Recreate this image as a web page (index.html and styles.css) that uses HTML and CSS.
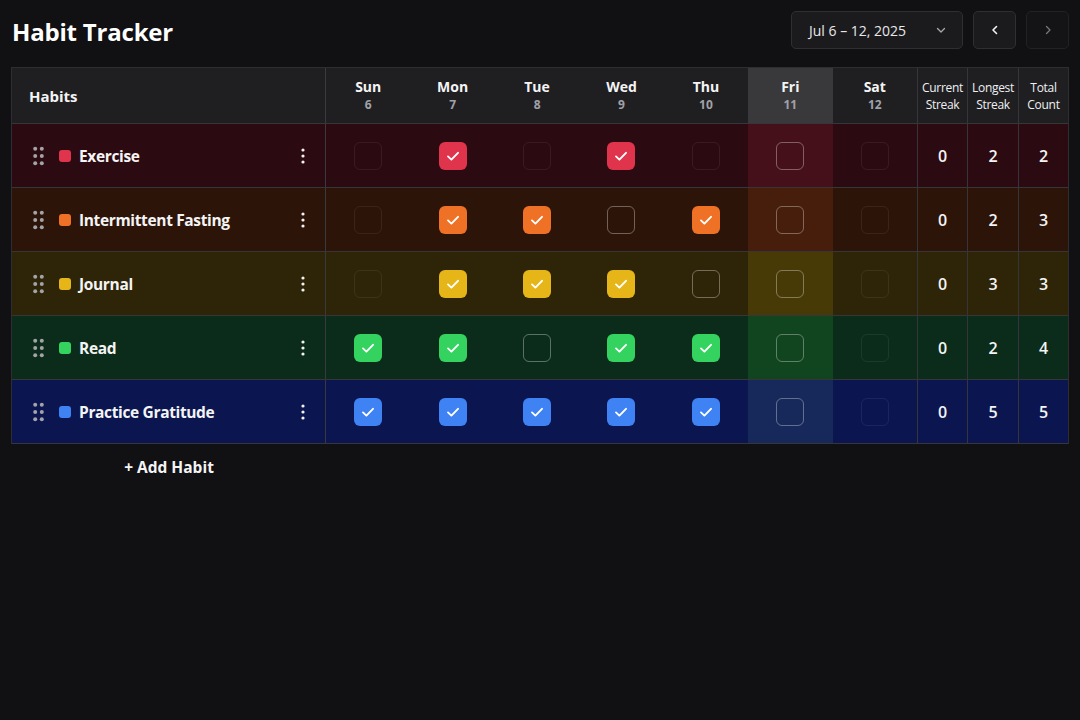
FILE: index.html
```html
<!DOCTYPE html>
<html lang="en">
<head>
<meta charset="utf-8">
<title>Habit Tracker</title>
<link rel="stylesheet" href="styles.css">
</head>
<body>
<div class="app">
  <header class="topbar">
    <h1 class="title">Habit Tracker</h1>
    <div class="controls">
      <button class="range">
        <span>Jul 6 – 12, 2025</span>
        <svg width="12" height="12" viewBox="0 0 12 12"><path d="M2.5 4.5 6 8l3.5-3.5" fill="none" stroke="#a8a8ad" stroke-width="1.3" stroke-linecap="round" stroke-linejoin="round"/></svg>
      </button>
      <button class="nav">
        <svg width="12" height="12" viewBox="0 0 12 12"><path d="M7.5 2.5 4 6l3.5 3.5" fill="none" stroke="#f2f2f2" stroke-width="1.6" stroke-linecap="round" stroke-linejoin="round"/></svg>
      </button>
      <button class="nav disabled">
        <svg width="12" height="12" viewBox="0 0 12 12"><path d="M4.5 2.5 8 6l-3.5 3.5" fill="none" stroke="#77777c" stroke-width="1.3" stroke-linecap="round" stroke-linejoin="round"/></svg>
      </button>
    </div>
  </header>

  <div class="table">
    <div class="row head">
      <div class="cell habits-h">Habits</div>
      <div class="cell day"><b>Sun</b><span>6</span></div>
      <div class="cell day"><b>Mon</b><span>7</span></div>
      <div class="cell day"><b>Tue</b><span>8</span></div>
      <div class="cell day"><b>Wed</b><span>9</span></div>
      <div class="cell day"><b>Thu</b><span>10</span></div>
      <div class="cell day today"><b>Fri</b><span>11</span></div>
      <div class="cell day"><b>Sat</b><span>12</span></div>
      <div class="cell stat-h first">Current<br>Streak</div>
      <div class="cell stat-h">Longest<br>Streak</div>
      <div class="cell stat-h">Total<br>Count</div>
    </div>
  </div>
  <div class="add"><span>+ Add Habit</span></div>
</div>
<script src="app.js"></script>
</body>
</html>
```
FILE: app.js
```js
const habits = [
  { name: "Exercise", cls: "red", days: ["f","c","f","c","f","n","f"], stats: [0,2,2] },
  { name: "Intermittent Fasting", cls: "orange", days: ["f","c","c","n","c","n","f"], stats: [0,2,3] },
  { name: "Journal", cls: "yellow", days: ["f","c","c","c","n","n","f"], stats: [0,3,3] },
  { name: "Read", cls: "green", days: ["c","c","n","c","c","n","f"], stats: [0,2,4] },
  { name: "Practice Gratitude", cls: "blue", days: ["c","c","c","c","c","n","f"], stats: [0,5,5] }
];
const check = '<svg width="18" height="18" viewBox="0 0 18 18"><path d="M4 9.4 7.4 12.6 14 5.8" fill="none" stroke="#fff" stroke-width="1.9" stroke-linecap="round" stroke-linejoin="round"/></svg>';
const grip = '<svg width="11" height="20" viewBox="0 0 11 20"><g fill="#a3a3a8"><circle cx="2.2" cy="2.7" r="2"/><circle cx="8.8" cy="2.7" r="2"/><circle cx="2.2" cy="10" r="2"/><circle cx="8.8" cy="10" r="2"/><circle cx="2.2" cy="17.3" r="2"/><circle cx="8.8" cy="17.3" r="2"/></g></svg>';
const kebab = '<svg width="4" height="16" viewBox="0 0 4 16"><g fill="#f2f2f2"><circle cx="2" cy="2" r="1.6"/><circle cx="2" cy="8" r="1.6"/><circle cx="2" cy="14" r="1.6"/></g></svg>';
const table = document.querySelector(".table");
habits.forEach(h => {
  const row = document.createElement("div");
  row.className = "row habit " + h.cls;
  let html = '<div class="cell name"><span class="grip">' + grip + '</span><span class="dot"></span><span class="label">' + h.name + '</span><span class="kebab">' + kebab + '</span></div>';
  h.days.forEach((d, i) => {
    const box = d === "c" ? '<span class="box checked">' + check + '</span>' : '<span class="box ' + (d === "f" ? "faint" : "open") + '"></span>';
    html += '<div class="cell day' + (i === 5 ? " today" : "") + '">' + box + '</div>';
  });
  h.stats.forEach((s, i) => { html += '<div class="cell stat' + (i === 0 ? " first" : "") + '">' + s + '</div>'; });
  row.innerHTML = html;
  table.appendChild(row);
});
```
FILE: styles.css
```css
* { box-sizing: border-box; }
html, body { margin: 0; background: #111013; }
body {
  font-family: "Open Sans", "Noto Sans", "DejaVu Sans", sans-serif;
  color: #f4f4f5;
}
.app { padding: 11px 11px 0 11px; }
.topbar {
  display: flex;
  align-items: center;
  justify-content: space-between;
  height: 38px;
  margin-bottom: 18px;
}
.title {
  margin: 2px 0 0 1px;
  font-size: 24px;
  font-weight: 700;
  letter-spacing: -0.2px;
  color: #ffffff;
}
.controls { display: flex; gap: 10px; }
button {
  font-family: inherit;
  cursor: pointer;
}
.range {
  width: 172px;
  height: 38px;
  display: flex;
  align-items: center;
  justify-content: space-between;
  padding: 0 15px 0 17px;
  background: #1b1b1e;
  border: 1px solid #2f2f33;
  border-radius: 5px;
  color: #e8e8ea;
  font-size: 14px;
}
.nav {
  width: 43px;
  height: 38px;
  display: flex;
  align-items: center;
  justify-content: center;
  background: #1b1b1e;
  border: 1px solid #2f2f33;
  border-radius: 5px;
}
.nav.disabled { background: #141416; border-color: #222225; }

.table {
  border: 1px solid #2e2e32;
  border-bottom: none;
}
.row {
  display: grid;
  grid-template-columns: 314px repeat(7, 1fr) 50px 51px 50px;
  border-bottom: 1px solid #36363a;
}
.row.head { height: 56px; background: #1f1f22; }
.row.habit { height: 64px; }
.cell { display: flex; align-items: center; justify-content: center; }
.habits-h {
  justify-content: flex-start;
  padding-left: 17px;
  font-size: 15px;
  font-weight: 700;
  border-right: 1px solid #3a3a3e;
}
.head .day { flex-direction: column; gap: 1px; }
.head .day b { font-size: 14px; font-weight: 700; line-height: 18px; }
.head .day span { font-size: 12px; font-weight: 700; color: #a1a1a8; line-height: 16px; }
.head .day.today { background: #39393c; }
.stat-h {
  font-size: 12px;
  line-height: 17px;
  text-align: center;
  letter-spacing: -0.3px;
  border-left: 1px solid #36363a;
  color: #f0f0f2;
}

.name {
  justify-content: flex-start;
  padding-left: 21px;
  border-right: 1px solid #3a3a3e;
}
.grip { display: flex; width: 11px; margin-right: 15px; }
.dot { width: 12px; height: 12px; border-radius: 3px; margin-right: 8px; }
.label { font-size: 15.5px; font-weight: 700; flex: 1; letter-spacing: -0.35px; }
.kebab { display: flex; margin-right: 20px; }

.box {
  width: 28px;
  height: 28px;
  border-radius: 6px;
  display: flex;
  align-items: center;
  justify-content: center;
}
.box.faint { border: 1px solid rgba(255,255,255,0.07); }
.box.open { border: 1.5px solid rgba(255,255,255,0.33); }
.stat {
  font-size: 16px;
  font-weight: 600;
  border-left: 1px solid #36363a;
}

.red { background: #2c0a11; }
.red .today { background: #46101b; }
.red .dot, .red .checked { background: #e0334c; }
.orange { background: #2d1409; }
.orange .today { background: #471d0b; }
.orange .dot, .orange .checked { background: #ee7126; }
.yellow { background: #2e2407; }
.yellow .today { background: #473a06; }
.yellow .dot, .yellow .checked { background: #e6b619; }
.green { background: #0b2c1a; }
.green .today { background: #10451f; }
.green .dot, .green .checked { background: #34d35f; }
.blue { background: #0b1650; }
.blue .today { background: #17295a; }
.blue .dot, .blue .checked { background: #3f82f3; }

.add {
  width: 316px;
  display: flex;
  justify-content: center;
  padding-top: 12px;
  font-size: 15.5px;
  font-weight: 700;
}
```
